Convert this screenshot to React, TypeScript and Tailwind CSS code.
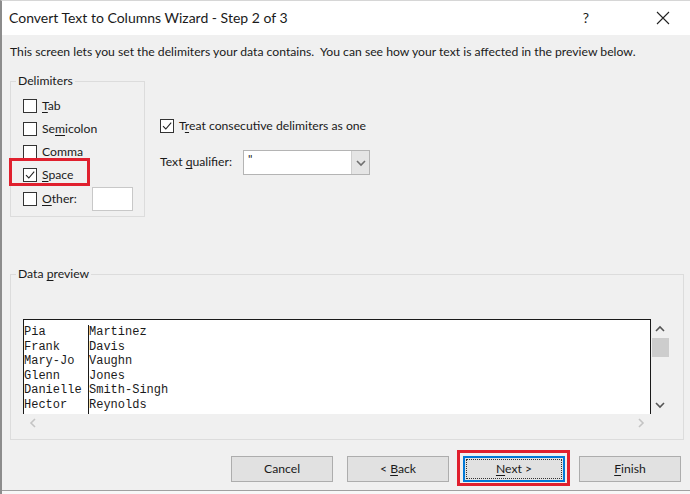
import React from "react";

const ui = { fontFamily: 'Lato, "Noto Sans", Arial, sans-serif' };
const mono = { fontFamily: '"Liberation Mono", "Courier New", monospace' };

function Check() {
  return (
    <svg width="12" height="12" viewBox="0 0 12 12" className="block">
      <path d="M2 6.2 L4.8 9 L10.2 2.6" fill="none" stroke="#222" strokeWidth="1.1" />
    </svg>
  );
}

function Box({ checked = false }: { checked?: boolean }) {
  return (
    <span className="flex h-[14px] w-[14px] shrink-0 items-center justify-center border border-[#333] bg-white">
      {checked && <Check />}
    </span>
  );
}

function U({ children }: { children: React.ReactNode }) {
  return <span className="underline decoration-1 underline-offset-2">{children}</span>;
}

function CheckRow({
  label,
  checked,
}: {
  label: React.ReactNode;
  checked?: boolean;
}) {
  return (
    <div className="flex h-[14px] items-center gap-[5px]">
      <Box checked={checked} />
      <span className="text-[12.2px] leading-none text-[#1a1a1a]">{label}</span>
    </div>
  );
}

function Chevron({ dir, color }: { dir: "up" | "down" | "left" | "right"; color: string }) {
  const d = {
    up: "M1 6 L5 2 L9 6",
    down: "M1 2 L5 6 L9 2",
    left: "M6 1 L2 5 L6 9",
    right: "M2 1 L6 5 L2 9",
  }[dir];
  const w = dir === "up" || dir === "down" ? 10 : 8;
  const h = dir === "up" || dir === "down" ? 8 : 10;
  return (
    <svg width={w} height={h} viewBox={`0 0 ${w} ${h}`} className="block">
      <path d={d} fill="none" stroke={color} strokeWidth="1.6" />
    </svg>
  );
}

function Button({ children, focused = false }: { children: React.ReactNode; focused?: boolean }) {
  return (
    <div
      className={
        "relative flex h-[26px] w-[102px] items-center justify-center bg-[#e1e1e1] text-[12.2px] text-[#1a1a1a] " +
        (focused ? "border-2 border-[#0078d7]" : "border border-[#adadad]")
      }
    >
      {focused && (
        <span className="pointer-events-none absolute inset-[1px] border border-dotted border-[#333]" />
      )}
      <span className="relative">{children}</span>
    </div>
  );
}

const rows: [string, string][] = [
  ["Pia", "Martinez"],
  ["Frank", "Davis"],
  ["Mary-Jo", "Vaughn"],
  ["Glenn", "Jones"],
  ["Danielle", "Smith-Singh"],
  ["Hector", "Reynolds"],
];

export default function App() {
  return (
    <div
      className="flex h-[494px] w-[690px] flex-col overflow-hidden border-l-2 border-t border-l-[#8c8c8c] border-t-[#d6d6d6] bg-[#f0f0f0]"
      style={ui}
    >
      {/* title bar */}
      <div className="flex h-[34px] shrink-0 items-center bg-white pl-[7px] text-[#1a1a1a]">
        <span className="flex-1 text-[14px] leading-none">Convert Text to Columns Wizard - Step 2 of 3</span>
        <span className="w-[20px] text-center text-[14px] leading-none">?</span>
        <span className="ml-[60px] mr-[20px] flex h-[14px] w-[14px] items-center justify-center">
          <svg width="14" height="14" viewBox="0 0 14 14">
            <path d="M1 1 L13 13 M13 1 L1 13" stroke="#222" strokeWidth="1.1" />
          </svg>
        </span>
      </div>

      {/* dialog body */}
      <div className="flex flex-1 flex-col pl-[8px]">
        <p className="mt-[9px] h-[16px] whitespace-nowrap text-[12.2px] leading-4 text-[#1a1a1a]">
          This screen lets you set the delimiters your data contains.&nbsp; You can see how your text is affected in the preview below.
        </p>

        <div className="mt-[14px] flex">
          <fieldset className="h-[143px] w-[135px] border border-[#dcdcdc] pl-[12px]">
            <legend className="-ml-[7px] px-[2px] text-[12.2px] leading-[14px] text-[#1a1a1a]">Delimiters</legend>
            <div className="mt-[11px] flex flex-col gap-[9px]">
              <CheckRow label={<><U>T</U>ab</>} />
              <CheckRow label={<>Se<U>m</U>icolon</>} />
              <CheckRow label={<>Comma</>} />
              <div className="relative">
                <CheckRow checked label={<><U>S</U>pace</>} />
                <span className="pointer-events-none absolute left-[-14px] top-[-10px] h-[28px] w-[81px] border-[3px] border-[#e0202e]" />
              </div>
            </div>
            <div className="mt-[5px] flex h-[24px] items-center">
              <Box />
              <span className="ml-[5px] w-[50px] text-[12.2px] leading-none text-[#1a1a1a]">
                <U>O</U>ther:
              </span>
              <span className="h-[24px] w-[41px] border border-[#c8c8c8] bg-white" />
            </div>
          </fieldset>

          <div className="ml-[15px] flex flex-col">
            <div className="mt-[45px] flex h-[14px] items-center gap-[5px]">
              <Box checked />
              <span className="text-[12.2px] leading-none text-[#1a1a1a]">
                T<U>r</U>eat consecutive delimiters as one
              </span>
            </div>
            <div className="mt-[17px] flex h-[25px] items-center">
              <span className="w-[83px] text-[12.2px] leading-none text-[#1a1a1a]">
                Text <U>q</U>ualifier:
              </span>
              <div className="flex h-[25px] w-[127px] border border-[#b4b4b4] bg-white">
                <span className="flex-1 pl-[4px] pt-[1px] text-[12px] leading-[14px] text-[#1a1a1a]">"</span>
                <span className="flex w-[18px] items-center justify-center border-l border-[#cfcfcf] bg-[#e5e5e5]">
                  <Chevron dir="down" color="#707070" />
                </span>
              </div>
            </div>
          </div>
        </div>

        {/* data preview */}
        <fieldset className="mt-[50px] h-[173px] w-[674px] border border-[#dcdcdc] pl-[12px]">
          <legend className="-ml-[7px] px-[2px] text-[12.2px] leading-[14px] text-[#1a1a1a]">
            Data <U>p</U>review
          </legend>
          <div className="mt-[38px] flex">
            <div className="flex w-[628px] flex-col">
              <div className="flex h-[95px] overflow-hidden border-l border-r border-t border-[#1a1a1a] bg-white pt-[5px] text-[12px] leading-[14.6px] text-[#1a1a1a]" style={mono}>
                <div className="w-[65px] border-r border-[#1a1a1a]">
                  {rows.map(([a]) => (
                    <div key={a}>{a}</div>
                  ))}
                </div>
                <div className="flex-1">
                  {rows.map(([, b]) => (
                    <div key={b}>{b}</div>
                  ))}
                </div>
              </div>
              <div className="flex h-[18px] items-center justify-between px-[6px]">
                <Chevron dir="left" color="#c4c4c4" />
                <Chevron dir="right" color="#c4c4c4" />
              </div>
            </div>
            <div className="flex h-[95px] w-[18px] flex-col items-center">
              <div className="flex h-[19px] items-center justify-center">
                <Chevron dir="up" color="#555" />
              </div>
              <div className="h-[19px] w-[17px] bg-[#cdcdcd]" />
              <div className="flex-1" />
              <div className="flex h-[19px] items-center justify-center">
                <Chevron dir="down" color="#555" />
              </div>
            </div>
          </div>
        </fieldset>

        {/* buttons */}
        <div className="mt-[16px] flex justify-end gap-[14px] pr-[9px]">
          <Button>Cancel</Button>
          <Button>
            &lt; <U>B</U>ack
          </Button>
          <div className="relative">
            <Button focused>
              <U>N</U>ext &gt;
            </Button>
            <span className="pointer-events-none absolute bottom-[-4px] left-[-6px] right-[-5px] top-[-6px] border-[3px] border-[#e0202e]" />
          </div>
          <Button>
            <U>F</U>inish
          </Button>
        </div>
        <div className="flex-1" />
      </div>
      <div className="h-[1px] shrink-0 bg-[#a0a0a0]" />
      <div className="h-[3px] shrink-0 bg-[#f7f7f7]" />
    </div>
  );
}
